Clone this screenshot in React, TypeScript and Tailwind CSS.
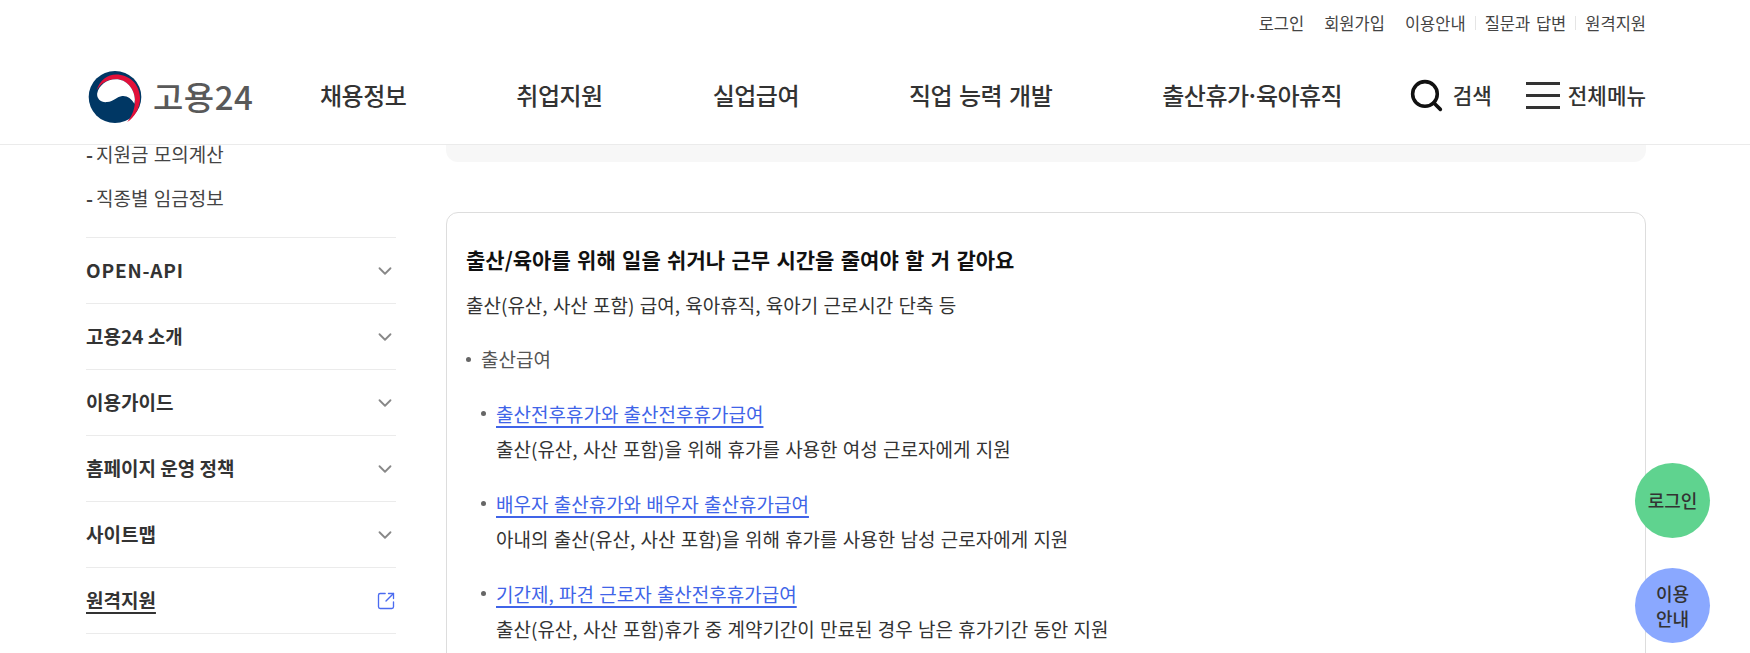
import { ChevronDown, Search, SquareArrowOutUpRight } from "lucide-react";

const topLinks = ["로그인", "회원가입", "이용안내", "질문과 답변", "원격지원"];
const sideMenus = ["고용24 소개", "이용가이드", "홈페이지 운영 정책", "사이트맵"];

const benefits = [
  { title: "출산전후휴가와 출산전후휴가급여", desc: "출산(유산, 사산 포함)을 위해 휴가를 사용한 여성 근로자에게 지원" },
  { title: "배우자 출산휴가와 배우자 출산휴가급여", desc: "아내의 출산(유산, 사산 포함)을 위해 휴가를 사용한 남성 근로자에게 지원" },
  { title: "기간제, 파견 근로자 출산전후휴가급여", desc: "출산(유산, 사산 포함)휴가 중 계약기간이 만료된 경우 남은 휴가기간 동안 지원" },
];

const Logo = () => (
  <div className="ml-[2px] mt-[3px] flex items-center gap-[11px]">
    <svg width="54" height="52" viewBox="0 0 52 51">
      <ellipse cx="26" cy="25.5" rx="25.8" ry="25.5" fill="#003764" />
      <path d="M8 19C11 9 19 3.5 27 3.5 40 3.5 50 13 50.5 26 51 36 45 46 38 50 43 44 46 36 45.5 28 45 17 37 8 27 8 18 8 12 12 8 19Z" fill="#e2103a" />
      <path d="M8.5 22C10 14 18 8 27 8 37 8 45 17 45.5 28L45 32C42 27 38 24 33 24.5 28 25 25 30 18 30.5 12 31 8 27 8.5 22Z" fill="#fff" />
    </svg>
    <span className="text-[33px] font-medium leading-none text-[#595959] tracking-[0.5px]">고용24</span>
  </div>
);

const Header = () => (
  <header className="h-[145px] shrink-0 border-b border-[#ebebeb] bg-white">
    <div className="ml-[86px] w-[1560px]">
      <ul className="flex h-[46px] items-center justify-end text-[16.5px] text-[#444] [word-spacing:2px]">
        {topLinks.map((link, i) => (
          <li key={link} className="flex items-center">
            {i > 0 && (i > 2 ? <span className="mx-[9px] h-[14px] w-px bg-[#e5e5e5]" /> : <span className="w-5" />)}
            <span>{link}</span>
          </li>
        ))}
      </ul>
      <div className="flex h-[98px] items-center">
        <div className="w-[234px]">
          <Logo />
        </div>
        <nav className="flex gap-[110px] text-[24px] font-medium tracking-[-0.5px] text-[#333] [word-spacing:2px]">
          <span>채용정보</span>
          <span>취업지원</span>
          <span>실업급여</span>
          <span>직업 능력 개발</span>
          <span>
            출산휴가<span className="-mx-[3px]">·</span>육아휴직
          </span>
        </nav>
        <div className="ml-auto flex items-center text-[21.25px] font-medium text-[#333]">
          <Search size={37} strokeWidth={2.3} className="mr-[8px] text-[#111]" />
          <span>검색</span>
          <div className="ml-[34px] mr-[8px] flex w-[34px] flex-col gap-[9px]">
            <span className="h-[3px] bg-[#333]" />
            <span className="h-[3px] bg-[#333]" />
            <span className="h-[3px] bg-[#333]" />
          </div>
          <span>전체메뉴</span>
        </div>
      </div>
    </div>
  </header>
);

const Sidebar = () => (
  <aside className="w-[310px] shrink-0">
    <ul className="h-[92px] text-[19px] text-[#444] [word-spacing:1px]">
      <li className="-mt-[13px] flex h-[44px] items-center">
        <span className="mr-[3px] font-semibold">-</span>지원금 모의계산
      </li>
      <li className="flex h-[44px] items-center">
        <span className="mr-[3px] font-semibold">-</span>직종별 임금정보
      </li>
    </ul>
    <ul className="mt-[13px] border-t border-[#ebebeb] text-[19px] font-semibold text-[#333]">
      <li className="flex h-[66px] items-center justify-between border-b border-[#ebebeb]">
        <span className="tracking-[0.8px]">OPEN-API</span>
        <ChevronDown size={22} className="text-[#888]" />
      </li>
      {sideMenus.map((menu) => (
        <li key={menu} className="flex h-[66px] items-center justify-between border-b border-[#ebebeb]">
          <span>{menu}</span>
          <ChevronDown size={22} className="text-[#888]" />
        </li>
      ))}
      <li className="flex h-[66px] items-center justify-between border-b border-[#ebebeb]">
        <span className="underline decoration-2 underline-offset-4">원격지원</span>
        <SquareArrowOutUpRight size={20} strokeWidth={1.6} className="text-[#4b6bf0]" />
      </li>
    </ul>
  </aside>
);

const Content = () => (
  <main className="w-[1200px]">
    <div className="h-[17px] rounded-b-xl bg-[#f7f7f7]" />
    <section className="mt-[50px] h-[600px] rounded-xl border border-[#ddd] px-[19px] pt-[30px]">
      <h2 className="text-[21px] font-semibold leading-[32px] text-[#111] [word-spacing:1.6px]">
        출산/육아를 위해 일을 쉬거나 근무 시간을 줄여야 할 거 같아요
      </h2>
      <p className="mt-[14px] text-[19px] leading-[32px] text-[#333] [word-spacing:1px]">
        출산(유산, 사산 포함) 급여, 육아휴직, 육아기 근로시간 단축 등
      </p>
      <div className="mt-[22px] flex items-center text-[19px] leading-[32px] text-[#555]">
        <span className="mr-[10px] h-[5px] w-[5px] rounded-full bg-[#666]" />
        출산급여
      </div>
      <ul className="mt-[23px] flex flex-col gap-[23px] pl-[15px] text-[19px] leading-[32px] text-[#333] [word-spacing:1px]">
        {benefits.map((item) => (
          <li key={item.title} className="relative pl-[15px]">
            <span className="absolute left-0 top-[13px] h-[5px] w-[5px] rounded-full bg-[#666]" />
            <a className="text-[#4064e8] underline decoration-2 underline-offset-4">{item.title}</a>
            <p className="mt-[3px]">{item.desc}</p>
          </li>
        ))}
      </ul>
    </section>
  </main>
);

export default function App() {
  return (
    <div className="relative flex h-[653px] flex-col overflow-hidden bg-white font-['Noto_Sans_CJK_KR',sans-serif]">
      <Header />
      <div className="ml-[86px] flex w-[1560px] gap-[50px]">
        <Sidebar />
        <Content />
      </div>
      <div className="absolute right-[40px] top-[463px] flex size-[75px] items-center justify-center rounded-full bg-[#5fd38f] text-[18px] font-medium text-[#333]">
        로그인
      </div>
      <div className="absolute right-[40px] top-[568px] flex size-[75px] items-center justify-center rounded-full bg-[#8aa8ff] text-center text-[18px] font-medium leading-[25px] text-[#333]">
        이용
        <br />
        안내
      </div>
    </div>
  );
}
